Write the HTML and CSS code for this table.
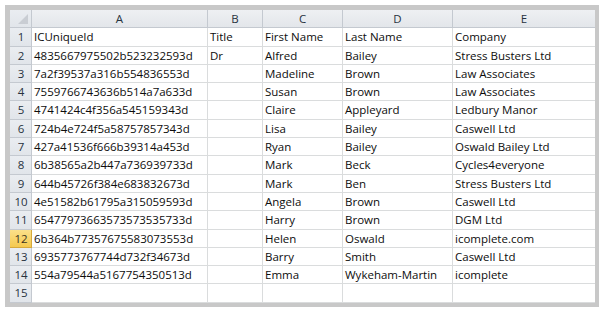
FILE: index.html
```html
<!DOCTYPE html>
<html>
<head>
<meta charset="utf-8">
<link rel="stylesheet" href="styles.css">
</head>
<body>
<div class="frame">
  <div class="sheet">
    <div class="hd corner"><span class="tri"></span></div>
    <div class="hd col">A</div><div class="hd col">B</div><div class="hd col">C</div><div class="hd col">D</div><div class="hd col">E</div>

    <div class="hd row">1</div><div class="c">ICUniqueId</div><div class="c">Title</div><div class="c">First Name</div><div class="c">Last Name</div><div class="c">Company</div>
    <div class="hd row">2</div><div class="c">4835667975502b523232593d</div><div class="c">Dr</div><div class="c">Alfred</div><div class="c">Bailey</div><div class="c">Stress Busters Ltd</div>
    <div class="hd row">3</div><div class="c">7a2f39537a316b554836553d</div><div class="c"></div><div class="c">Madeline</div><div class="c">Brown</div><div class="c">Law Associates</div>
    <div class="hd row">4</div><div class="c">7559766743636b514a7a633d</div><div class="c"></div><div class="c">Susan</div><div class="c">Brown</div><div class="c">Law Associates</div>
    <div class="hd row">5</div><div class="c">4741424c4f356a545159343d</div><div class="c"></div><div class="c">Claire</div><div class="c">Appleyard</div><div class="c">Ledbury Manor</div>
    <div class="hd row">6</div><div class="c">724b4e724f5a58757857343d</div><div class="c"></div><div class="c">Lisa</div><div class="c">Bailey</div><div class="c">Caswell Ltd</div>
    <div class="hd row">7</div><div class="c">427a41536f666b39314a453d</div><div class="c"></div><div class="c">Ryan</div><div class="c">Bailey</div><div class="c">Oswald Bailey Ltd</div>
    <div class="hd row">8</div><div class="c">6b38565a2b447a736939733d</div><div class="c"></div><div class="c">Mark</div><div class="c">Beck</div><div class="c">Cycles4everyone</div>
    <div class="hd row">9</div><div class="c">644b45726f384e683832673d</div><div class="c"></div><div class="c">Mark</div><div class="c">Ben</div><div class="c">Stress Busters Ltd</div>
    <div class="hd row">10</div><div class="c">4e51582b61795a315059593d</div><div class="c"></div><div class="c">Angela</div><div class="c">Brown</div><div class="c">Caswell Ltd</div>
    <div class="hd row">11</div><div class="c">65477973663573573535733d</div><div class="c"></div><div class="c">Harry</div><div class="c">Brown</div><div class="c">DGM Ltd</div>
    <div class="hd row sel">12</div><div class="c">6b364b77357675583073553d</div><div class="c"></div><div class="c">Helen</div><div class="c">Oswald</div><div class="c">icomplete.com</div>
    <div class="hd row">13</div><div class="c">6935773767744d732f34673d</div><div class="c"></div><div class="c">Barry</div><div class="c">Smith</div><div class="c">Caswell Ltd</div>
    <div class="hd row">14</div><div class="c">554a79544a5167754350513d</div><div class="c"></div><div class="c">Emma</div><div class="c">Wykeham-Martin</div><div class="c">icomplete</div>
    <div class="hd row">15</div><div class="c"></div><div class="c"></div><div class="c"></div><div class="c"></div><div class="c"></div>
  </div>
</div>
</body>
</html>
```
FILE: styles.css
```css
html, body {
  margin: 0;
  padding: 0;
  background: #ffffff;
}
body {
  padding: 5px 0 0 5px;
  font-family: "Open Sans", "Noto Sans", sans-serif;
  font-size: 11.5px;
  color: #0d0d0d;
}
.frame {
  width: 585px;
  border-style: solid;
  border-color: #c8c8c8;
  border-width: 5px 4px 4px 5px;
  background: #ffffff;
}
.sheet {
  display: grid;
  grid-template-columns: 22px 176px 55px 80px 110px 142px;
  grid-auto-rows: 18.3px;
}
.c {
  border-right: 1px solid #dadcdd;
  border-bottom: 1px solid #dadcdd;
  padding: 0 0 0 2px;
  line-height: 18px;
  white-space: nowrap;
  overflow: hidden;
}
.c:nth-child(6n) {
  border-right: none;
}
.hd {
  background: linear-gradient(#eaedf1, #e1e5ea);
  border-right: 1px solid #c4c9d0;
  border-bottom: 1px solid #c4c9d0;
  color: #27323e;
  text-align: center;
  line-height: 18px;
}
.col {
  background: linear-gradient(#eef0f3, #e3e6ea);
}
.col:nth-child(6) {
  border-right: none;
}
.row {
  padding-left: 1px;
}
.sel {
  background: linear-gradient(#fbe08a, #f5c94f);
  border-right-color: #d6a93c;
  border-bottom-color: #d6a93c;
  color: #3b3320;
}
.corner {
  position: relative;
}
.tri {
  position: absolute;
  right: 3px;
  bottom: 3px;
  width: 0;
  height: 0;
  border-left: 10px solid transparent;
  border-bottom: 10px solid #c9cdd3;
}
```
